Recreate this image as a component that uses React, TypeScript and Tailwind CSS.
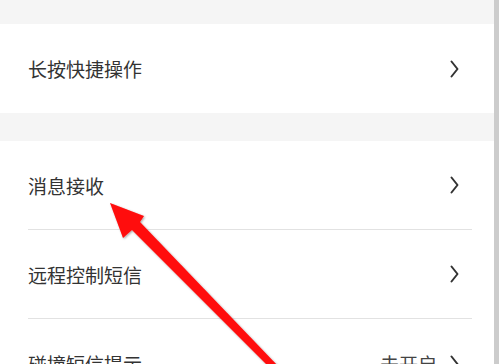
import React from "react";

function Chevron() {
  return (
    <svg width="9" height="18" viewBox="0 0 9 18" className="shrink-0">
      <path d="M1.5 1.5 L7.5 9 L1.5 16.5" fill="none" stroke="#333333" strokeWidth="2" strokeLinecap="round" strokeLinejoin="round" />
    </svg>
  );
}

interface RowProps {
  label: string;
  value?: string;
  divider?: boolean;
}

function Row({ label, value, divider }: RowProps) {
  return (
    <div className="shrink-0 bg-white pl-[28px]">
      <div
        className={
          "mr-[22px] flex h-[89px] items-center justify-between pr-[13px] " +
          (divider ? "border-b border-[#e2e2e2]" : "")
        }
      >
        <span className="text-[19px] leading-none text-[#333333]">{label}</span>
        <div className="flex items-center gap-[13px]">
          {value && <span className="text-[19px] leading-none text-[#444444]">{value}</span>}
          <Chevron />
        </div>
      </div>
    </div>
  );
}

export default function App() {
  return (
    <div
      className="relative flex h-[364px] w-[499px] overflow-hidden bg-[#f5f5f5]"
      style={{ fontFamily: '"Noto Sans CJK SC", "Noto Sans", sans-serif' }}
    >
      <div className="flex w-[494px] flex-col">
        <div className="h-[24px] shrink-0" />
        <Row label="长按快捷操作" />
        <div className="h-[28px] shrink-0" />
        <Row label="消息接收" divider />
        <Row label="远程控制短信" divider />
        <Row label="碰撞短信提示" value="未开启" />
      </div>
      <div className="w-[5px] bg-[#cccccc]" />

      <svg className="pointer-events-none absolute left-0 top-0" width="499" height="364" viewBox="0 0 499 364">
        <defs>
          <filter id="sh" x="-20%" y="-20%" width="140%" height="140%">
            <feDropShadow dx="1" dy="1" stdDeviation="1" floodColor="#000000" floodOpacity="0.35" />
          </filter>
        </defs>
        <polygon
          points="110,203 144,216 140,222 278,366 268,366 132,230 123,238"
          fill="#ff0a0a"
          filter="url(#sh)"
        />
      </svg>
    </div>
  );
}
